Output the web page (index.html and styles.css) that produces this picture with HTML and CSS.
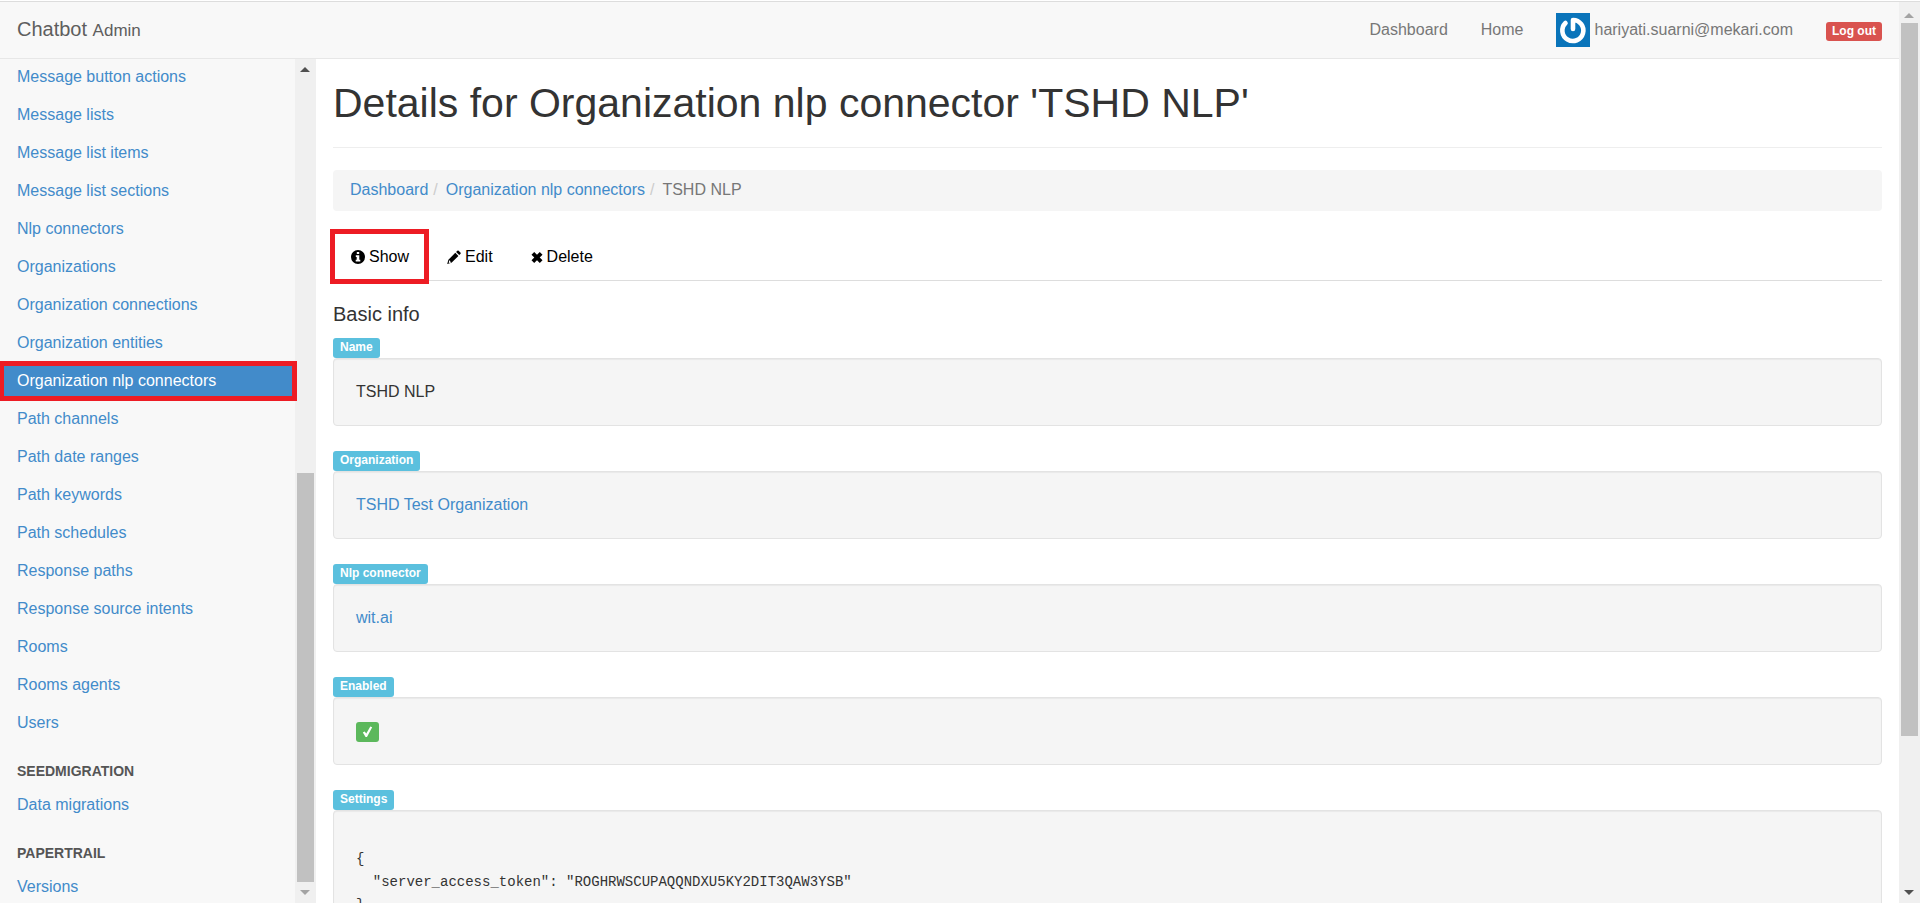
FILE: index.html
```html
<!DOCTYPE html>
<html lang="en">
<head>
<meta charset="utf-8">
<title>Details for Organization nlp connector 'TSHD NLP'</title>
<link rel="stylesheet" href="styles.css">
</head>
<body>
<div class="viewport">
  <div class="page">
    <header class="navbar">
      <a class="brand" href="#">Chatbot <small>Admin</small></a>
      <nav class="nav-links">
        <a href="#">Dashboard</a>
        <a href="#">Home</a>
        <a class="user" href="#">
          <svg class="avatar" viewBox="0 0 34 34" aria-hidden="true">
            <rect width="34" height="34" fill="#0a74ba"/>
            <path d="M17 16V7A10.500 10.500 0 1 1 9.500 10" fill="none" stroke="#fff" stroke-width="4.600" stroke-linecap="round" stroke-linejoin="round"/>
          </svg>
          <span>hariyati.suarni@mekari.com</span>
        </a>
        <a class="logout" href="#">Log out</a>
      </nav>
    </header>
    <div class="body">
      <aside class="sidebar">
        <nav class="side-nav">
          <ul>
            <li><a href="#">Message button actions</a></li>
            <li><a href="#">Message lists</a></li>
            <li><a href="#">Message list items</a></li>
            <li><a href="#">Message list sections</a></li>
            <li><a href="#">Nlp connectors</a></li>
            <li><a href="#">Organizations</a></li>
            <li><a href="#">Organization connections</a></li>
            <li><a href="#">Organization entities</a></li>
            <li class="active"><a href="#">Organization nlp connectors</a></li>
            <li><a href="#">Path channels</a></li>
            <li><a href="#">Path date ranges</a></li>
            <li><a href="#">Path keywords</a></li>
            <li><a href="#">Path schedules</a></li>
            <li><a href="#">Response paths</a></li>
            <li><a href="#">Response source intents</a></li>
            <li><a href="#">Rooms</a></li>
            <li><a href="#">Rooms agents</a></li>
            <li><a href="#">Users</a></li>
          </ul>
          <h2>SEEDMIGRATION</h2>
          <ul><li><a href="#">Data migrations</a></li></ul>
          <h2>PAPERTRAIL</h2>
          <ul><li><a href="#">Versions</a></li></ul>
        </nav>
        <div class="scrollbar scrollbar-side" aria-hidden="true">
          <svg class="arrow" viewBox="0 0 21 21"><path d="M5 13h10l-5-5z" fill="#505050"/></svg>
          <div class="track"><div class="thumb"></div></div>
          <svg class="arrow" viewBox="0 0 21 21"><path d="M5 8h10l-5 5z" fill="#a3a3a3"/></svg>
        </div>
      </aside>
      <main class="content">
        <h1>Details for Organization nlp connector 'TSHD NLP'</h1>
        <ol class="breadcrumb">
          <li><a href="#">Dashboard</a></li>
          <li><a href="#">Organization nlp connectors</a></li>
          <li>TSHD NLP</li>
        </ol>
        <ul class="tabs">
          <li class="current"><a href="#">
            <svg class="icon" viewBox="0 0 14 14" aria-hidden="true"><path fill-rule="evenodd" d="M7 0a7 7 0 1 0 0 14A7 7 0 0 0 7 0zM5.800 2h2.400v2H5.800zM4.800 5.200h3.500v4.600h1V11.500H4.700V9.800h1V6.900h-.9z"/></svg>
            <span>Show</span></a></li>
          <li><a href="#">
            <svg class="icon" viewBox="0 0 14 14" aria-hidden="true"><path fill-rule="evenodd" d="M10.300.8a1 1 0 0 1 1.400 0l1.700 1.700a1 1 0 0 1 0 1.400L12.200 5.100 9.100 2zM8.300 2.800l3.100 3.100-6.900 6.900L.2 14l1.200-4.300zM2.200 10.600l-.5 1.800.7.700 1.700-.5v-.9H3.100v-1.100z"/></svg>
            <span>Edit</span></a></li>
          <li><a href="#">
            <svg class="icon icon-x" viewBox="0 0 12 14" aria-hidden="true"><path d="M3.200 2 6 4.800 8.800 2l2.700 2.700L8.700 7.500l2.800 2.800L8.800 13 6 10.200 3.200 13 .5 10.300l2.800-2.800L.5 4.700z"/></svg>
            <span>Delete</span></a></li>
        </ul>
        <h3>Basic info</h3>
        <dl class="fields">
          <dt><span>Name</span></dt>
          <dd>TSHD NLP</dd>
          <dt><span>Organization</span></dt>
          <dd><a href="#">TSHD Test Organization</a></dd>
          <dt><span>Nlp connector</span></dt>
          <dd><a href="#">wit.ai</a></dd>
          <dt><span>Enabled</span></dt>
          <dd><span class="enabled" role="img" aria-label="Yes"><svg viewBox="0 0 11 12" aria-hidden="true"><path d="M.8 6.600 2.600 5.400 4.300 7.600 8.300.6 10.200 1.200 5 11H3.600z" fill="#fff"/></svg></span></dd>
          <dt><span>Settings</span></dt>
          <dd><pre>{
  "server_access_token": "ROGHRWSCUPAQQNDXU5KY2DIT3QAW3YSB"
}</pre></dd>
        </dl>
      </main>
    </div>
  </div>
  <div class="scrollbar scrollbar-page" aria-hidden="true">
    <svg class="arrow" viewBox="0 0 21 21"><path d="M5 16h10l-5-5z" fill="#a3a3a3"/></svg>
    <div class="track"><div class="thumb"></div></div>
    <svg class="arrow" viewBox="0 0 21 21"><path d="M5 8h10l-5 5z" fill="#505050"/></svg>
  </div>
</div>
</body>
</html>
```

FILE: styles.css
```css
* { box-sizing: border-box; }

body {
  margin: 0;
  padding-top: 1px;
  font: 16px/22px "Liberation Sans", Arial, sans-serif;
  color: #333;
  background: #fff;
}

a { color: #428bca; text-decoration: none; }
ul, ol, dl, dd { margin: 0; padding: 0; list-style: none; }

.viewport {
  display: flex;
  height: calc(100vh - 1px);
  border-top: 1px solid #ddd;
  overflow: hidden;
}

.page {
  flex: 1;
  min-width: 0;
  display: flex;
  flex-direction: column;
}

/* Top bar */
.navbar {
  flex: none;
  display: flex;
  align-items: center;
  justify-content: space-between;
  height: 57px;
  padding: 0 17px;
  background: #f8f8f8;
  border-bottom: 1px solid #e7e7e7;
}
.navbar a { color: #777; }
.navbar .brand { font-size: 20px; color: #5e5e5e; }
.brand small { font-size: 17px; }
.nav-links { display: flex; align-items: center; gap: 33px; }
.user { display: flex; align-items: center; gap: 4px; }
.avatar { width: 34px; height: 34px; }
.navbar .logout {
  margin-top: 2px;
  padding: 0 6px;
  border-radius: 3px;
  background: #d9534f;
  color: #fff;
  font-size: 12px;
  font-weight: bold;
  line-height: 19px;
}

.body { flex: 1; min-height: 0; display: flex; }

/* Sidebar */
.sidebar { flex: none; display: flex; width: 316px; background: #f8f8f8; }
.side-nav { flex: 1; margin-top: -1px; }
.side-nav a { display: block; padding: 0 17px; line-height: 38px; }
.side-nav h2 {
  margin: 0;
  padding: 17px 17px 3px;
  font-size: 14px;
  line-height: 24px;
  color: #555;
}
.active { position: relative; }
.side-nav .active a { background: #428bca; color: #fff; }
.active::after {
  content: "";
  position: absolute;
  inset: -1px -2px -1px 0;
  border: 5px solid #ed1c24;
  border-left-width: 4px;
}

/* Scrollbars */
.scrollbar { flex: none; display: flex; flex-direction: column; width: 21px; background: #f0f0f0; }
.arrow { flex: none; width: 21px; height: 21px; }
.track { flex: 1; display: flex; flex-direction: column; padding: 0 2px; }
.thumb { background: #c1c1c1; }
.scrollbar-side .track { justify-content: flex-end; }
.scrollbar-side .thumb { height: 51%; }
.scrollbar-page .thumb { height: 83%; }

/* Content */
.content { flex: 1; min-width: 0; padding: 0 17px; overflow: hidden; }
h1 {
  margin: 0 0 22px;
  padding: 20px 0;
  border-bottom: 1px solid #eee;
  font-size: 41px;
  font-weight: normal;
  line-height: 48px;
}

.breadcrumb {
  display: flex;
  padding: 9px 17px 10px;
  border-radius: 4px;
  background: #f5f5f5;
  color: #777;
}
.breadcrumb li + li::before { content: "/"; padding: 0 8px 0 5px; color: #ccc; }

.tabs { display: flex; gap: 2px; margin-top: 22px; border-bottom: 1px solid #ddd; }
.tabs li { position: relative; }
.tabs a {
  display: flex;
  align-items: center;
  gap: 4px;
  padding: 13px 18px 12px;
  color: #000;
}
.icon { width: 14px; height: 14px; }
.icon-x { width: 12px; }
.current::after {
  content: "";
  position: absolute;
  inset: -4px -2px -4px -3px;
  border: 5px solid #ed1c24;
}

h3 { margin: 22px 0 13px; font-size: 20px; font-weight: normal; line-height: 22px; }

.fields dt { display: flex; }
.fields dt span {
  padding: 0 7px 1px;
  border-radius: 3px;
  background: #5bc0de;
  color: #fff;
  font-size: 12px;
  font-weight: bold;
  line-height: 19px;
}
.fields dd {
  min-height: 68px;
  margin-bottom: 25px;
  padding: 22px;
  border: 1px solid #e3e3e3;
  border-radius: 4px;
  background: #f5f5f5;
  box-shadow: inset 0 1px 1px rgba(0, 0, 0, 0.05);
}
.enabled {
  display: flex;
  align-items: center;
  justify-content: center;
  width: 23px;
  height: 20px;
  margin-top: 2px;
  border-radius: 3px;
  background: #5cb85c;
}
.enabled svg { width: 11px; height: 12px; }
pre {
  margin: 15px 0;
  font-family: Consolas, "Liberation Mono", monospace;
  font-size: 14px;
  line-height: 23px;
}
```
